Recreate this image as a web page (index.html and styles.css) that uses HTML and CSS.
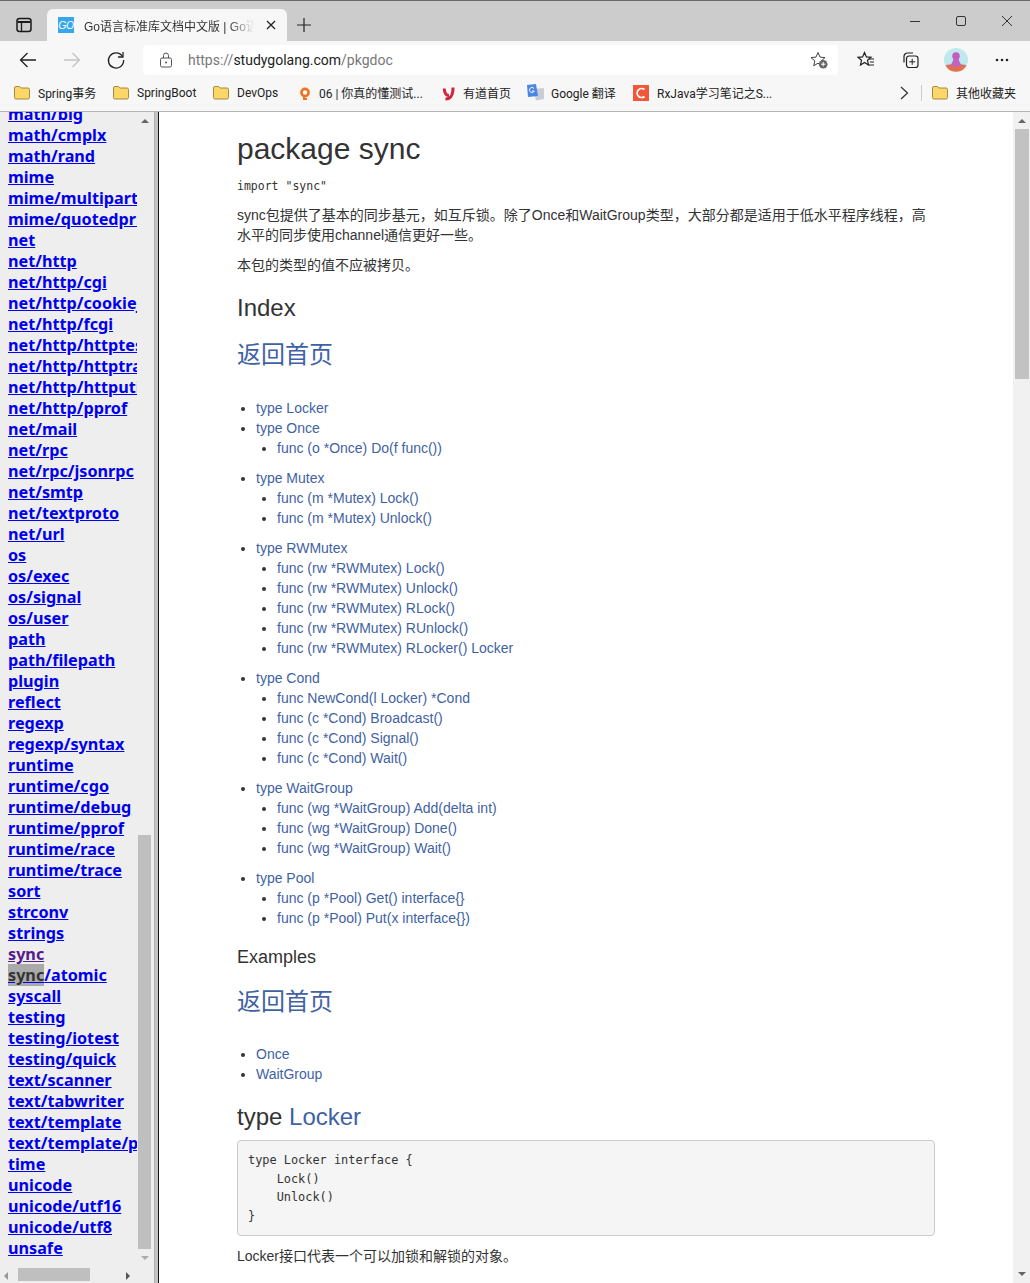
FILE: index.html
```html
<!DOCTYPE html>
<html lang="zh">
<head>
<meta charset="utf-8">
<title>Go语言标准库文档中文版</title>
<link rel="stylesheet" href="styles.css">
</head>
<body>
<div class="browser">
  <header class="titlebar">
    <svg class="tabs-icon" width="16" height="16" viewBox="0 0 16 16"><rect x="1" y="1.500" width="14" height="13" rx="2.500" fill="none" stroke="#1a1a1a" stroke-width="1.500"/><path d="M1.500 5h13" stroke="#1a1a1a" stroke-width="2"/><path d="M5.500 5v9" stroke="#1a1a1a" stroke-width="1.300"/></svg>
    <div class="tab">
      <span class="fav-go">GO</span>
      <span class="tab-title">Go语言标准库文档中文版 | Go语言中文网</span>
      <svg class="tab-close" width="10" height="10" viewBox="0 0 10 10"><path d="M1 1l8 8M9 1l-8 8" stroke="#222" stroke-width="1.300"/></svg>
    </div>
    <svg class="new-tab" width="16" height="16" viewBox="0 0 16 16"><path d="M8 1v14M1 8h14" stroke="#222" stroke-width="1.200"/></svg>
    <div class="winbtns">
      <svg width="12" height="12" viewBox="0 0 12 12"><path d="M1 6.500h10" stroke="#333" stroke-width="1"/></svg>
      <svg width="12" height="12" viewBox="0 0 12 12"><rect x="1.500" y="1.500" width="9" height="9" rx="1.500" fill="none" stroke="#333"/></svg>
      <svg width="12" height="12" viewBox="0 0 12 12"><path d="M1 1l10 10M11 1L1 11" stroke="#333" stroke-width="1"/></svg>
    </div>
  </header>
  <div class="toolbar">
    <svg class="nav-btn" width="20" height="20" viewBox="0 0 20 20"><path d="M18 10H2.500M9.500 3l-7 7 7 7" fill="none" stroke="#222" stroke-width="1.300"/></svg>
    <svg class="nav-btn" width="20" height="20" viewBox="0 0 20 20"><path d="M2 10h15.500M10.500 3l7 7-7 7" fill="none" stroke="#c4c4c4" stroke-width="1.300"/></svg>
    <svg class="nav-btn" width="20" height="20" viewBox="0 0 20 20"><path d="M16.500 6.500A7.600 7.600 0 1 0 17.600 10" fill="none" stroke="#222" stroke-width="1.300"/><path d="M17 2v5h-5" fill="none" stroke="#222" stroke-width="1.300"/></svg>
    <div class="address">
      <svg width="14" height="16" viewBox="0 0 14 16"><rect x="1.500" y="6" width="11" height="9" rx="1.500" fill="none" stroke="#555"/><path d="M4.500 6V3.500a2.500 2.500 0 0 1 5 0V6" fill="none" stroke="#555"/><circle cx="7" cy="10.500" r="1" fill="#555"/></svg>
      <span class="url"><span class="dim">https://</span>studygolang.com<span class="dim">/pkgdoc</span></span>
      <svg class="star-add" width="18" height="18" viewBox="0 0 18 18"><path d="M8 1.500l2 4.600 5 .5-3.800 3.300 1.100 4.900L8 12.200l-4.300 2.600 1.100-4.900L1 6.600l5-.5z" fill="none" stroke="#444"/><circle cx="13.200" cy="13.200" r="4.300" fill="#666"/><path d="M13.200 11v4.400M11 13.200h4.400" stroke="#fff"/></svg>
    </div>
    <svg class="tool-a" width="18" height="18" viewBox="0 0 18 18"><path d="M7.500 1.500l1.900 4.400 4.600.4-3.500 3 1 4.700-4-2.500-4 2.500 1-4.700-3.500-3 4.600-.4z" fill="none" stroke="#222" stroke-width="1.200"/><path d="M12 8h5M13 11h4M12 14h5" stroke="#222"/></svg>
    <svg class="tool-b" width="18" height="18" viewBox="0 0 18 18"><path d="M3 11.500V5.500A3.500 3.500 0 0 1 6.500 2H12" fill="none" stroke="#222" stroke-width="1.200"/><rect x="5.500" y="5" width="11.500" height="11.500" rx="2.500" fill="none" stroke="#222" stroke-width="1.200"/><path d="M11.200 7.800v6M8.200 10.800h6" stroke="#222"/></svg>
    <svg class="avatar" width="24" height="24" viewBox="0 0 24 24"><circle cx="12" cy="12" r="12" fill="#bfe9ec"/><path d="M1.500 17.500c4-2 17-2 21 0a12 12 0 0 1-21 0z" fill="#e2704c"/><path d="M6 17.500c1.500-1 3-4.500 3.500-7h5c.5 2.500 2 6 3.500 7-3 1.500-9 1.500-12 0z" fill="#c263bd"/><circle cx="12" cy="8" r="3.800" fill="#c45cc0"/></svg>
    <svg class="more" width="14" height="4" viewBox="0 0 14 4"><circle cx="2" cy="2" r="1.300" fill="#222"/><circle cx="7" cy="2" r="1.300" fill="#222"/><circle cx="12" cy="2" r="1.300" fill="#222"/></svg>
  </div>
  <nav class="bookmarks">
    <a class="bm bm-spring"><svg class="folder" width="16" height="14" viewBox="0 0 16 14"><use href="#folder-shape"/></svg>Spring事务</a>
    <a class="bm bm-boot"><svg class="folder" width="16" height="14" viewBox="0 0 16 14"><use href="#folder-shape"/></svg>SpringBoot</a>
    <a class="bm bm-devops"><svg class="folder" width="16" height="14" viewBox="0 0 16 14"><use href="#folder-shape"/></svg>DevOps</a>
    <a class="bm bm-test"><svg width="16" height="16" viewBox="0 0 16 16"><rect width="16" height="16" fill="#fdf6ee"/><circle cx="8" cy="7.500" r="3.600" fill="none" stroke="#e8742a" stroke-width="2.600"/><path d="M7 10.500v3.500h3" fill="none" stroke="#e8742a" stroke-width="2"/></svg>06 | 你真的懂测试...</a>
    <a class="bm bm-youdao"><svg width="14" height="16" viewBox="0 0 14 16"><path d="M2.200 3.500C2.500 8 3.500 10.500 7 10.500" fill="none" stroke="#d4213d" stroke-width="3"/><path d="M11 2.500C11 9 10 14 3.500 14" fill="none" stroke="#d4213d" stroke-width="3"/></svg>有道首页</a>
    <a class="bm bm-google"><svg width="17" height="17" viewBox="0 0 17 17"><path d="M6 5l11-1v11l-8 1.500z" fill="#c9ced6"/><path d="M0 1l9-1 2 12-10 1z" fill="#4a86e8"/><path d="M7 4.500A2.500 2.500 0 1 0 7.300 7H5" fill="none" stroke="#fff"/></svg>Google 翻译</a>
    <a class="bm bm-rx"><svg width="16" height="16" viewBox="0 0 16 16"><rect width="16" height="16" fill="#f1583a"/><path d="M11.500 4.500a4.500 4.500 0 1 0 0 7" fill="none" stroke="#fff" stroke-width="1.700"/></svg>RxJava学习笔记之S...</a>
    <svg class="bm-more" width="9" height="14" viewBox="0 0 9 14"><path d="M1 1l6.500 6L1 13" fill="none" stroke="#333" stroke-width="1.200"/></svg>
    <span class="bm-sep"></span>
    <a class="bm bm-other"><svg class="folder" width="16" height="14" viewBox="0 0 16 14"><use href="#folder-shape"/></svg>其他收藏夹</a>
  </nav>
  <svg class="defs" width="0" height="0"><defs><g id="folder-shape"><path d="M.5 2a1.500 1.500 0 0 1 1.500-1.500h3.500l1.500 1.500h7a1.500 1.500 0 0 1 1.500 1.500v8a1.500 1.500 0 0 1-1.500 1.500h-12a1.500 1.500 0 0 1-1.500-1.500z" fill="#fbd76a" stroke="#a78a3c"/></g></defs></svg>

  <div class="frames">
    <aside class="sidebar">
      <div class="side-view">
        <ul class="pkg-list">
          <li><a href="#">math/big</a></li>
          <li><a href="#">math/cmplx</a></li>
          <li><a href="#">math/rand</a></li>
          <li><a href="#">mime</a></li>
          <li><a href="#">mime/multipart</a></li>
          <li><a href="#">mime/quotedprintable</a></li>
          <li><a href="#">net</a></li>
          <li><a href="#">net/http</a></li>
          <li><a href="#">net/http/cgi</a></li>
          <li><a href="#">net/http/cookiejar</a></li>
          <li><a href="#">net/http/fcgi</a></li>
          <li><a href="#">net/http/httptest</a></li>
          <li><a href="#">net/http/httptrace</a></li>
          <li><a href="#">net/http/httputil</a></li>
          <li><a href="#">net/http/pprof</a></li>
          <li><a href="#">net/mail</a></li>
          <li><a href="#">net/rpc</a></li>
          <li><a href="#">net/rpc/jsonrpc</a></li>
          <li><a href="#">net/smtp</a></li>
          <li><a href="#">net/textproto</a></li>
          <li><a href="#">net/url</a></li>
          <li><a href="#">os</a></li>
          <li><a href="#">os/exec</a></li>
          <li><a href="#">os/signal</a></li>
          <li><a href="#">os/user</a></li>
          <li><a href="#">path</a></li>
          <li><a href="#">path/filepath</a></li>
          <li><a href="#">plugin</a></li>
          <li><a href="#">reflect</a></li>
          <li><a href="#">regexp</a></li>
          <li><a href="#">regexp/syntax</a></li>
          <li><a href="#">runtime</a></li>
          <li><a href="#">runtime/cgo</a></li>
          <li><a href="#">runtime/debug</a></li>
          <li><a href="#">runtime/pprof</a></li>
          <li><a href="#">runtime/race</a></li>
          <li><a href="#">runtime/trace</a></li>
          <li><a href="#">sort</a></li>
          <li><a href="#">strconv</a></li>
          <li><a href="#">strings</a></li>
          <li><a href="#" class="visited">sync</a></li>
          <li><a href="#"><span class="found">sync</span>/atomic</a></li>
          <li><a href="#">syscall</a></li>
          <li><a href="#">testing</a></li>
          <li><a href="#">testing/iotest</a></li>
          <li><a href="#">testing/quick</a></li>
          <li><a href="#">text/scanner</a></li>
          <li><a href="#">text/tabwriter</a></li>
          <li><a href="#">text/template</a></li>
          <li><a href="#">text/template/parse</a></li>
          <li><a href="#">time</a></li>
          <li><a href="#">unicode</a></li>
          <li><a href="#">unicode/utf16</a></li>
          <li><a href="#">unicode/utf8</a></li>
          <li><a href="#">unsafe</a></li>
        </ul>
      </div>
      <div class="side-vbar">
        <span class="arrow arrow-up"></span>
        <span class="side-vspace"></span>
        <span class="side-vthumb"></span>
        <span class="arrow arrow-down"></span>
      </div>
      <div class="side-hbar">
        <span class="arrow arrow-left"></span>
        <span class="side-hthumb"></span>
        <span class="arrow arrow-right"></span>
      </div>
    </aside>
    <div class="splitter"></div>
    <main class="doc">
      <article class="doc-body">
        <h1>package sync</h1>
        <p class="import"><code>import "sync"</code></p>
        <p>sync包提供了基本的同步基元，如互斥锁。除了Once和WaitGroup类型，大部分都是适用于低水平程序线程，高水平的同步使用channel通信更好一些。</p>
        <p>本包的类型的值不应被拷贝。</p>
        <h2>Index</h2>
        <h2 class="back"><a href="#">返回首页</a></h2>
        <ul class="index">
          <li><a href="#">type Locker</a></li>
          <li><a href="#">type Once</a>
            <ul><li><a href="#">func (o *Once) Do(f func())</a></li></ul>
          </li>
          <li><a href="#">type Mutex</a>
            <ul>
              <li><a href="#">func (m *Mutex) Lock()</a></li>
              <li><a href="#">func (m *Mutex) Unlock()</a></li>
            </ul>
          </li>
          <li><a href="#">type RWMutex</a>
            <ul>
              <li><a href="#">func (rw *RWMutex) Lock()</a></li>
              <li><a href="#">func (rw *RWMutex) Unlock()</a></li>
              <li><a href="#">func (rw *RWMutex) RLock()</a></li>
              <li><a href="#">func (rw *RWMutex) RUnlock()</a></li>
              <li><a href="#">func (rw *RWMutex) RLocker() Locker</a></li>
            </ul>
          </li>
          <li><a href="#">type Cond</a>
            <ul>
              <li><a href="#">func NewCond(l Locker) *Cond</a></li>
              <li><a href="#">func (c *Cond) Broadcast()</a></li>
              <li><a href="#">func (c *Cond) Signal()</a></li>
              <li><a href="#">func (c *Cond) Wait()</a></li>
            </ul>
          </li>
          <li><a href="#">type WaitGroup</a>
            <ul>
              <li><a href="#">func (wg *WaitGroup) Add(delta int)</a></li>
              <li><a href="#">func (wg *WaitGroup) Done()</a></li>
              <li><a href="#">func (wg *WaitGroup) Wait()</a></li>
            </ul>
          </li>
          <li><a href="#">type Pool</a>
            <ul>
              <li><a href="#">func (p *Pool) Get() interface{}</a></li>
              <li><a href="#">func (p *Pool) Put(x interface{})</a></li>
            </ul>
          </li>
        </ul>
        <h3>Examples</h3>
        <h2 class="back back-tight"><a href="#">返回首页</a></h2>
        <ul class="index">
          <li><a href="#">Once</a></li>
          <li><a href="#">WaitGroup</a></li>
        </ul>
        <h2>type <a href="#">Locker</a></h2>
        <pre>type Locker interface {
    Lock()
    Unlock()
}</pre>
        <p>Locker接口代表一个可以加锁和解锁的对象。</p>
      </article>
      <div class="doc-vbar">
        <span class="arrow arrow-up"></span>
        <span class="doc-vthumb"></span>
        <span class="doc-vspace"></span>
        <span class="arrow arrow-down"></span>
      </div>
    </main>
  </div>
</div>
</body>
</html>
```
FILE: styles.css
```css
* { box-sizing: border-box; }
html, body { margin: 0; height: 100%; }
body { overflow: hidden; background: #fff; font-family: "Liberation Sans", "Noto Sans CJK SC", sans-serif; }
.browser { display: flex; flex-direction: column; height: 1283px; }
.defs { position: absolute; }

.titlebar { display: flex; align-items: flex-end; height: 41px; background: #cccccc; border-top: 1px solid #6a6a6a; flex: none; }
.tabs-icon { margin: 0 0 8px 16px; flex: none; }
.tab { display: flex; align-items: center; width: 240px; height: 32px; margin-left: 15px; padding: 0 0 0 11px; background: #f7f7f7; border-radius: 6px 6px 0 0; flex: none; }
.fav-go { width: 16px; height: 16px; background: #37a6ec; color: #fff; font: italic 10.5px/16px "Liberation Sans", sans-serif; text-align: center; flex: none; letter-spacing: -0.5px; }
.tab-title { width: 170px; margin-left: 10px; overflow: hidden; white-space: nowrap; font-size: 12px; color: #333; -webkit-mask-image: linear-gradient(to right, #000 85%, transparent); mask-image: linear-gradient(to right, #000 85%, transparent); }
.tab-close { margin-left: 12px; flex: none; }
.new-tab { margin: 0 0 8px 9px; flex: none; }
.winbtns { display: flex; gap: 34px; margin: 0 17px 14px auto; align-self: flex-end; }

.toolbar { display: flex; align-items: center; height: 37px; background: #f7f7f7; flex: none; }
.nav-btn { margin-left: 18px; flex: none; }
.nav-btn + .nav-btn { margin-left: 24px; }
.address { display: flex; align-items: center; width: 695px; height: 30px; margin-left: 17px; padding: 0 10px 0 16px; background: #fff; border-radius: 4px; flex: none; }
.url { margin-left: 15px; font: 14px Roboto, sans-serif; color: #222; }
.dim { color: #777; }
.star-add { margin-left: auto; }
.tool-a { margin-left: 19px; flex: none; }
.tool-b { margin-left: 26px; flex: none; }
.avatar { margin-left: 25px; flex: none; }
.more { margin-left: 27px; flex: none; }

.bookmarks { display: flex; align-items: center; height: 34px; padding: 0 0 4px 14px; background: #f7f7f7; border-bottom: 1px solid #b4b4b4; flex: none; }
.bm { display: flex; align-items: center; gap: 8px; font: 12px Roboto, "Noto Sans CJK SC", sans-serif; color: #222; white-space: nowrap; flex: none; }
.bm-spring { width: 99px; }
.bm-boot { width: 100px; }
.bm-devops { width: 84px; }
.bm-test { width: 145px; gap: 6px; }
.bm-youdao { width: 85px; gap: 7px; }
.bm-google { width: 106px; gap: 7px; }
.bm-more { margin-left: auto; flex: none; }
.bm-sep { width: 1px; height: 16px; margin-left: 12px; background: #ccc; flex: none; }
.bm-other { margin: 0 14px 0 10px; }

.frames { display: flex; flex: 1; min-height: 0; }
.sidebar { position: relative; width: 154px; background: #eeeeee; overflow: hidden; flex: none; }
.side-view { height: 100%; overflow: hidden; }
.pkg-list { list-style: none; margin: -8px 0 0; padding: 0 0 0 8px; width: 137px; overflow: hidden; white-space: nowrap; font: bold 16.2px/21px "Noto Sans", sans-serif; }
.pkg-list a { color: #0000ee; }
.pkg-list a.visited { color: #551a8b; }
.found { background: #aaa; color: #333; }

.side-vbar { position: absolute; top: 0; right: 2px; bottom: 15px; width: 15px; display: flex; flex-direction: column; align-items: center; background: #eee; }
.side-vspace { flex: 1; }
.side-vthumb { width: 13px; height: 414px; background: #bfbfbf; }
.side-hbar { position: absolute; left: 0; right: 0; bottom: 0; height: 15px; display: flex; align-items: center; background: #eeeeee; }
.side-hthumb { align-self: flex-start; width: 72px; height: 13px; margin-left: 10px; background: #bfbfbf; }
.arrow { display: block; width: 0; height: 0; flex: none; }
.arrow-up { margin: 7px 0 5px; border: 4px solid transparent; border-top: 0; border-bottom: 4px solid #666; }
.arrow-down { margin: 5px 0 7px; border: 4px solid transparent; border-bottom: 0; border-top: 4px solid #666; }
.arrow-left { margin-left: 4px; border: 4px solid transparent; border-left: 0; border-right: 4px solid #999; }
.arrow-right { margin-left: 36px; border: 4px solid transparent; border-right: 0; border-left: 4px solid #555; }
.side-vbar .arrow-down { margin: 7px 0 8px; border-top-color: #aaa; }

.splitter { width: 5px; background: #c4c4c4; border-right: 1px solid #111; border-left: 1px solid #b0b0b0; flex: none; }
.doc { display: flex; flex: 1; min-width: 0; background: #fff; overflow: hidden; }
.doc-body { flex: 1; min-width: 0; padding: 0 78px; color: #333; font-size: 14px; line-height: 20px; overflow: hidden; }
.doc-body h1 { margin: 20px 0 10px; font-size: 30px; font-weight: 400; line-height: 33px; }
.doc-body h2 { margin: 20px 0 10px; font-size: 24px; font-weight: 400; line-height: 26px; }
.doc-body h3 { margin: 19px 0 22px; font-size: 18px; font-weight: 400; line-height: 20px; }
.doc-body p { margin: 0 0 10px; }
.doc-body a { color: #3f62a4; text-decoration: none; }
.import code { font: 11.5px "DejaVu Sans Mono", monospace; }
.doc-body .back { margin-top: 21px; margin-bottom: 30px; }
.doc-body .back-tight { margin-bottom: 29px; }
.index { margin: 0 0 10px; padding-left: 19px; }
.index ul { margin: 0 0 10px; padding-left: 21px; list-style: disc; }
pre { margin: 0 0 10px; padding: 10px; height: 96px; font: 11.9px/18.57px "DejaVu Sans Mono", monospace; color: #333; background: #f5f5f5; border: 1px solid #ccc; border-radius: 4px; }

.doc-vbar { width: 17px; display: flex; flex-direction: column; align-items: center; background: #f1f1f1; flex: none; }
.doc-vthumb { width: 14px; height: 250px; margin-top: 1px; background: #c2c2c2; }
.doc-vspace { flex: 1; }
```
